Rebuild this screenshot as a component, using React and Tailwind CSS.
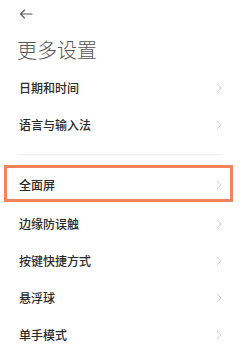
import React from "react";

const Chevron = () => (
  <svg width="6" height="10" viewBox="0 0 6 10" fill="none" className="shrink-0">
    <path d="M1.2 1.2l3.6 3.8-3.6 3.8" stroke="#cfcfcf" strokeWidth="1" strokeLinecap="round" strokeLinejoin="round" />
  </svg>
);

const Row = ({ label }) => (
  <div className="flex h-[37px] items-center justify-between pl-[19px] pr-[21px]">
    <span className="text-[12px] font-medium text-[#2a2a2a] leading-none">{label}</span>
    <Chevron />
  </div>
);

export default function App() {
  return (
    <div
      className="w-[243px] h-[351px] overflow-hidden bg-white"
      style={{ fontFamily: '"Noto Sans CJK SC", "Noto Sans", sans-serif' }}
    >
      <div className="pt-[9px] pl-[19px] h-[20px]">
        <svg width="14" height="10" viewBox="0 0 14 10" fill="none">
          <path d="M13 5H1.5M5.5 1L1.5 5l4 4" stroke="#555" strokeWidth="1.1" strokeLinecap="round" strokeLinejoin="round" />
        </svg>
      </div>
      <div className="mt-[18px] pl-[17px] h-[24px] flex items-center">
        <span className="text-[20px] leading-none text-[#555555] font-light">更多设置</span>
      </div>
      <div className="mt-[7px]">
        <Row label="日期和时间" />
        <Row label="语言与输入法" />
      </div>
      <div className="mt-[11px] ml-[18px] mr-[21px] h-px bg-[#efefef]" />
      <div className="mt-[10px] ml-[4px] mr-[10px] h-[37px] border-[3px] border-[#f5825a] flex items-center justify-between pl-[12px] pr-[8px] pt-[3px]">
        <span className="text-[12px] font-medium text-[#2a2a2a] leading-none">全面屏</span>
        <Chevron />
      </div>
      <div className="mt-[3px]">
        <Row label="边缘防误触" />
        <Row label="按键快捷方式" />
        <Row label="悬浮球" />
        <Row label="单手模式" />
      </div>
    </div>
  );
}
